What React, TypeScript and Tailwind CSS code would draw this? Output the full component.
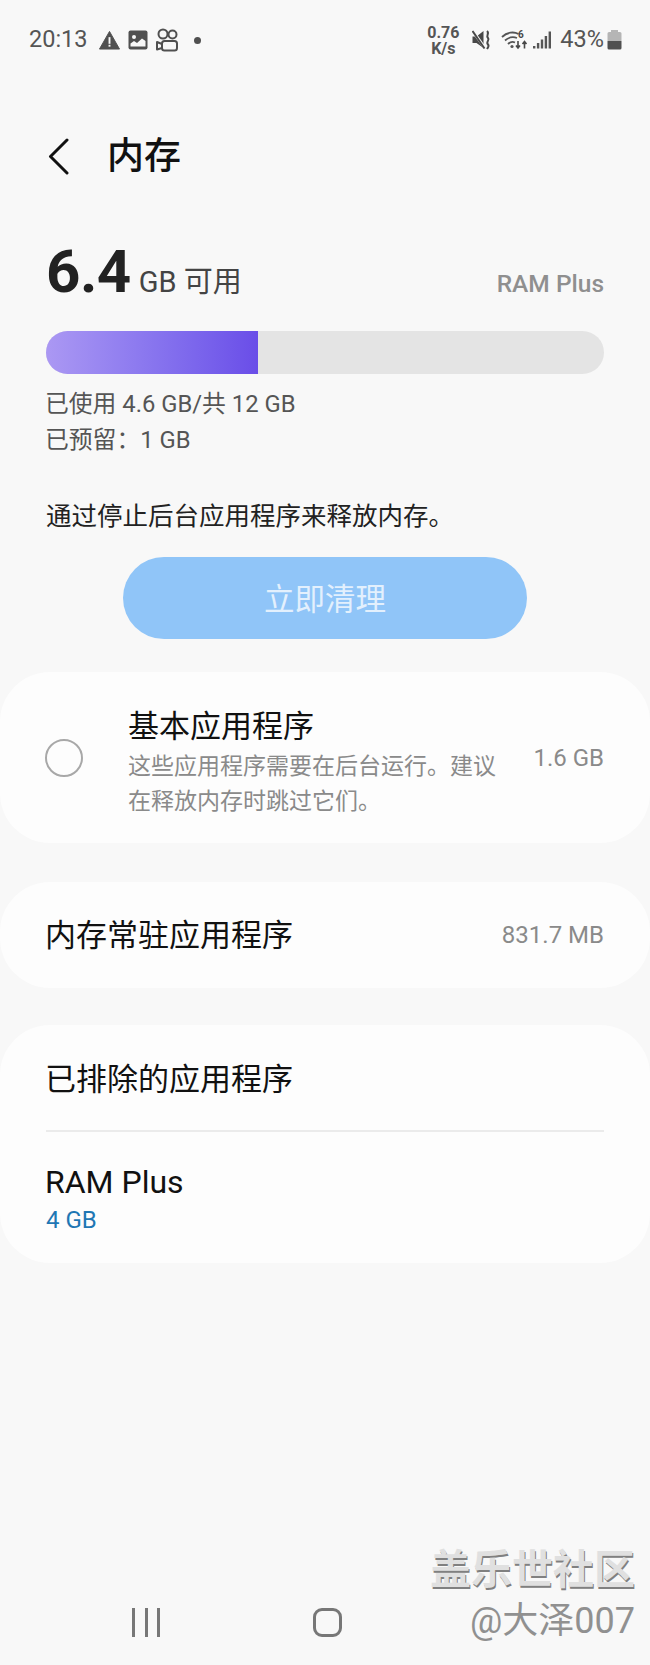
import { ReactNode } from 'react'

const font = 'font-["Roboto","Noto_Sans_CJK_SC",sans-serif]'

function AlertIcon() {
    return (
        <svg width="21" height="20" viewBox="0 0 22 20">
            <path d="M11 1 L21.5 19.5 H0.5 Z" fill="#505050" stroke="#505050" strokeLinejoin="round" />
            <rect x="10" y="7" width="2" height="7" fill="#f8f8f8" />
            <rect x="10" y="15" width="2" height="2" fill="#f8f8f8" />
        </svg>
    )
}

function ImageIcon() {
    return (
        <svg width="20" height="20" viewBox="0 0 20 20">
            <rect width="19" height="19" x="0.5" y="0.5" rx="2" fill="#505050" />
            <circle cx="6" cy="7" r="2" fill="#f8f8f8" />
            <path d="M2.5 16.5 V13.5 L6 11 L9 13 L14 8.5 L17.5 11 V16.5 Z" fill="#f8f8f8" />
        </svg>
    )
}

function VideoAppIcon() {
    return (
        <svg width="22" height="24" viewBox="0 0 22 24" fill="none" stroke="#505050" strokeWidth="2">
            <circle cx="7" cy="6" r="4.5" />
            <circle cx="16.5" cy="6.5" r="4" />
            <rect x="6" y="13" width="15" height="9.5" rx="2.5" />
            <path d="M6 16 L1 14 V21.5 L6 20" strokeLinejoin="round" />
        </svg>
    )
}

function MuteIcon() {
    return (
        <svg width="19" height="20" viewBox="0 0 19 20" fill="none">
            <path d="M0.5 6.5 H4.5 L11.5 1 V18 L4.5 13 H0.5 Z" fill="#484848" />
            <path d="M0.5 0.5 L12.5 17.5" stroke="#f8f8f8" strokeWidth="3" />
            <path d="M0.5 1 L12.5 18.5" stroke="#484848" strokeWidth="2" />
            <path d="M15 1 C18 3.5 13.5 5.5 16 8 C18 10 13.5 12 16 14.5 C17.5 16 16 17.5 15 19" stroke="#484848" strokeWidth="2" />
        </svg>
    )
}

function WifiIcon() {
    return (
        <svg width="27" height="20" viewBox="0 0 27 20" fill="none">
            <path d="M1 7 C6 2 13 1.5 17.5 4" stroke="#555555" strokeWidth="1.8" />
            <path d="M4 10.5 C8 7 12 6.5 16 8" stroke="#555555" strokeWidth="1.8" />
            <path d="M7 14 C9 12 12 11.5 14 12.5" stroke="#555555" strokeWidth="1.8" />
            <circle cx="11" cy="16.5" r="1.6" fill="#555555" />
            <text x="17" y="8" fontSize="10" fontWeight="700" fill="#484848" fontFamily="Roboto">6</text>
            <path d="M17 11 V18 M15 15.5 L17 18 L19 15.5 M23.5 18.5 V11.5 M21.5 14 L23.5 11.5 L25.5 14" stroke="#484848" strokeWidth="1.6" />
        </svg>
    )
}

function SignalIcon() {
    return (
        <svg width="18" height="18" viewBox="0 0 18 18" fill="#555555">
            <rect x="0" y="15" width="2.4" height="2.5" />
            <rect x="3.9" y="12" width="2.4" height="5.5" />
            <rect x="7.8" y="8.5" width="2.4" height="9" />
            <rect x="11.7" y="5" width="2.4" height="12.5" />
            <rect x="15.6" y="0.5" width="2.4" height="17" />
        </svg>
    )
}

function BatteryIcon() {
    return (
        <svg width="15" height="20" viewBox="0 0 15 20">
            <rect x="4" y="0" width="7" height="2" fill="#b5b5b5" />
            <path d="M2 2 H13 A1.5 1.5 0 0 1 14.5 3.5 V11 H0.5 V3.5 A1.5 1.5 0 0 1 2 2 Z" fill="#b5b5b5" />
            <path d="M0.5 11 H14.5 V18 A1.5 1.5 0 0 1 13 19.5 H2 A1.5 1.5 0 0 1 0.5 18 Z" fill="#505050" />
        </svg>
    )
}

function StatusBar() {
    return (
        <div className="flex h-[80px] items-center justify-between pl-[29px] pr-[28px]">
            <div className="flex items-center">
                <span className="w-[70px] text-[23.5px] leading-none text-[#555555]">20:13</span>
                <AlertIcon />
                <span className="ml-[8px] flex"><ImageIcon /></span>
                <span className="ml-[8px] flex"><VideoAppIcon /></span>
                <span className="ml-[16px] size-[7px] rounded-full bg-[#505050]" />
            </div>
            <div className="flex items-center">
                <div className="flex w-[36px] flex-col items-center pt-[2px] text-[16px] leading-[16px] font-bold text-[#555555]">
                    <span>0.76</span>
                    <span>K/s</span>
                </div>
                <span className="ml-[11px] flex"><MuteIcon /></span>
                <span className="ml-[10px] flex"><WifiIcon /></span>
                <span className="ml-[5px] flex"><SignalIcon /></span>
                <span className="ml-[9px] text-[23.5px] leading-none text-[#555555]">43%</span>
                <span className="ml-[3px] flex"><BatteryIcon /></span>
            </div>
        </div>
    )
}

function Card({ className, children }: { className: string; children: ReactNode }) {
    return <div className={`rounded-[50px] bg-[#fdfdfd] px-[46px] ${className}`}>{children}</div>
}

export default function App() {
    return (
        <div className={`${font} relative flex h-[1665px] w-[650px] flex-col overflow-hidden bg-[#f8f8f8]`}>
            <StatusBar />

            {/* Header */}
            <div className="mt-[54px] flex h-[44px] items-center pl-[48px]">
                <svg width="21" height="37" viewBox="0 0 21 37" fill="none" stroke="#111111" strokeWidth="3" strokeLinecap="round" strokeLinejoin="round">
                    <path d="M19 2 L2.5 18.5 L19 35" />
                </svg>
                <h1 className="ml-[38px] text-[37px] leading-none font-medium text-[#111111]">内存</h1>
            </div>

            {/* Summary */}
            <div className="mt-[64px] px-[46px]">
                <div className="flex h-[60px] items-end justify-between">
                    <div className="flex items-baseline">
                        <span className="text-[60px] leading-[60px] font-bold tracking-[-0.5px] text-[#222222]">6.4</span>
                        <span className="ml-[8px] text-[29px] leading-none text-[#444444]">GB 可用</span>
                    </div>
                    <span className="mb-[6px] text-[24.5px] leading-none font-medium text-[#8f8f8f]">RAM Plus</span>
                </div>
                <div className="mt-[29px] h-[43px] overflow-hidden rounded-full bg-[#e4e4e4]">
                    <div className="h-full w-[212px] bg-gradient-to-r from-[#ab98f3] to-[#6a4de8]" />
                </div>
                <p className="mt-[12px] -ml-[1px] h-[36px] text-[23.8px] leading-[36px] text-[#555555]">已使用 4.6 GB/共 12 GB</p>
                <p className="-ml-[1px] h-[36px] text-[23.8px] leading-[36px] text-[#555555]">已预留：1 GB</p>
                <p className="mt-[39px] text-[25.5px] leading-[38px] text-[#222222]">通过停止后台应用程序来释放内存。</p>
            </div>

            <button className="mx-auto mt-[22px] h-[82px] w-[404px] rounded-full bg-[#90c5f8] pt-[4px] text-[30.5px] text-[#e3f0fd]">
                立即清理
            </button>

            {/* Memory groups */}
            <Card className="mt-[33px] flex h-[171px] items-center">
                <span className="-ml-[1px] size-[38px] shrink-0 rounded-full border-2 border-[#a8a8a8]" />
                <div className="ml-[45px] w-[380px] shrink-0 pt-[11px]">
                    <p className="mb-[2px] text-[31px] leading-[40px] text-[#111111]">基本应用程序</p>
                    <p className="text-[23px] leading-[35px] text-[#8a8a8a]">这些应用程序需要在后台运行。建议在释放内存时跳过它们。</p>
                </div>
                <span className="ml-auto text-[24px] whitespace-nowrap text-[#8a8a8a]">1.6 GB</span>
            </Card>

            <Card className="mt-[39px] flex h-[106px] items-center justify-between">
                <span className="-ml-[1px] pt-[3px] text-[31px] text-[#111111]">内存常驻应用程序</span>
                <span className="text-[24px] text-[#8a8a8a]">831.7 MB</span>
            </Card>

            <Card className="mt-[37px] h-[238px]">
                <div className="flex h-[107px] items-center border-b-2 border-[#ebebeb] pt-[6px]">
                    <span className="-ml-[1px] text-[31px] text-[#111111]">已排除的应用程序</span>
                </div>
                <div className="pt-[30px]">
                    <p className="-ml-[1px] text-[32px] leading-[40px] text-[#111111]">RAM Plus</p>
                    <p className="text-[24px] leading-[36px] text-[#1f77b4]">4 GB</p>
                </div>
            </Card>

            {/* Navigation bar */}
            <div className="mt-auto mb-[28px] flex h-[29px] items-center pl-[132px]">
                <div className="flex h-full w-[28px] justify-between">
                    <span className="w-[3px] bg-[#777777]" />
                    <span className="w-[3px] bg-[#777777]" />
                    <span className="w-[3px] bg-[#777777]" />
                </div>
                <span className="ml-[153px] size-[29px] rounded-[9px] border-[3px] border-[#777777]" />
            </div>

            {/* Watermark */}
            <div className="absolute right-[15px] bottom-[22px] flex flex-col items-end text-[#8a8a8a]">
                <span className="text-[41px] leading-[50px] font-bold text-[#e0e0e0] [text-shadow:1px_2px_0_#808080]">盖乐世社区</span>
                <span className="mt-[4px] text-[36px] leading-[44px] text-[#909090]">@大泽007</span>
            </div>
        </div>
    )
}
